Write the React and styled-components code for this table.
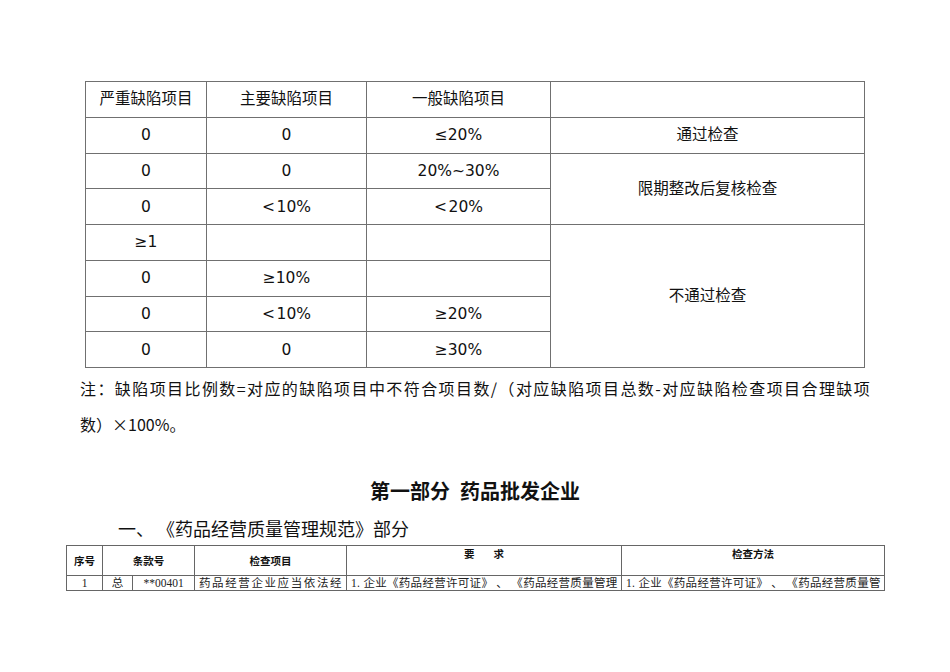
import React from "react";
import styled, { createGlobalStyle } from "styled-components";

const GlobalStyle = createGlobalStyle`
    html, body {
        margin: 0;
        padding: 0;
        background: #fff;
    }
    body {
        font-family: "DejaVu Sans", "Noto Sans CJK SC", sans-serif;
        color: #111;
    }
`;

const rows = [
    ["0", "0", "≤20%"],
    ["0", "0", "20%~30%"],
    ["0", "<\u200a10%", "<\u200a20%"],
    ["≥1", "", ""],
    ["0", "≥10%", ""],
    ["0", "<\u200a10%", "≥20%"],
    ["0", "0", "≥30%"],
];

const results = {
    0: { text: "通过检查", span: 1 },
    1: { text: "限期整改后复核检查", span: 2 },
    3: { text: "不通过检查", span: 4 },
};

const App = () => {
    return (
        <Page>
            <GlobalStyle />
            <GradeTable>
                <colgroup>
                    <col style={{ width: 121 }} />
                    <col style={{ width: 160 }} />
                    <col style={{ width: 184 }} />
                    <col style={{ width: 314 }} />
                </colgroup>
                <tbody>
                    <GradeRow>
                        <GradeCell>严重缺陷项目</GradeCell>
                        <GradeCell>主要缺陷项目</GradeCell>
                        <GradeCell>一般缺陷项目</GradeCell>
                        <GradeCell />
                    </GradeRow>
                    {rows.map((r, i) => (
                        <GradeRow key={i}>
                            {r.map((c, j) => (
                                <GradeCell key={j}>{c}</GradeCell>
                            ))}
                            {results[i] && (
                                <GradeCell rowSpan={results[i].span}>
                                    {results[i].text}
                                </GradeCell>
                            )}
                        </GradeRow>
                    ))}
                </tbody>
            </GradeTable>

            <Note>
                <NoteLine>
                    注：缺陷项目比例数=对应的缺陷项目中不符合项目数/（对应缺陷项目总数-对应缺陷检查项目合理缺项
                </NoteLine>
                <div>数）×100%。</div>
            </Note>

            <PartTitle>第一部分&nbsp;&nbsp;药品批发企业</PartTitle>
            <SectionTitle>一、{"\u2006"}《药品经营质量管理规范》部分</SectionTitle>

            <CheckTable>
                <colgroup>
                    <col style={{ width: 36 }} />
                    <col style={{ width: 30 }} />
                    <col style={{ width: 62 }} />
                    <col style={{ width: 152 }} />
                    <col style={{ width: 275 }} />
                    <col style={{ width: 263 }} />
                </colgroup>
                <tbody>
                    <HeadRow>
                        <HeadCell>序号</HeadCell>
                        <HeadCell colSpan={2}>条款号</HeadCell>
                        <HeadCell>检查项目</HeadCell>
                        <HeadCell $top>要&nbsp;&nbsp;&nbsp;&nbsp;&nbsp;&nbsp;&nbsp;&nbsp;求</HeadCell>
                        <HeadCell $top>检查方法</HeadCell>
                    </HeadRow>
                    <DataRow>
                        <DataCell $center>1</DataCell>
                        <DataCell $center>总</DataCell>
                        <DataCell $center>**00401</DataCell>
                        <DataCell $spacing={1.6}>药品经营企业应当依法经</DataCell>
                        <DataCell $spacing={0.3}>1. 企业《药品经营许可证》&nbsp;、&nbsp;《药品经营质量管理</DataCell>
                        <DataCell $spacing={0.3}>1. 企业《药品经营许可证》&nbsp;、&nbsp;《药品经营质量管</DataCell>
                    </DataRow>
                </tbody>
            </CheckTable>
        </Page>
    );
};

export default App;

const Page = styled.div`
    width: 950px;
    height: 672px;
    overflow: hidden;
    box-sizing: border-box;
    padding-top: 81px;
`;

const GradeTable = styled.table`
    margin-left: 85px;
    width: 779px;
    border-collapse: collapse;
    table-layout: fixed;
`;

const GradeRow = styled.tr`
    height: 35.75px;
`;

const GradeCell = styled.td`
    border: 1px solid #707070;
    padding: 0;
    text-align: center;
    vertical-align: middle;
    font-size: 15.5px;
    line-height: 20px;
`;

const Note = styled.div`
    margin: 2px 80px 0 80px;
    font-size: 16px;
    line-height: 36px;
    font-family: "Noto Sans CJK SC", "DejaVu Sans", sans-serif;
`;

const NoteLine = styled.div`
    text-align: justify;
    text-align-last: justify;
    white-space: nowrap;
    letter-spacing: 0.25px;
`;

const PartTitle = styled.div`
    margin-top: 35px;
    height: 30px;
    line-height: 30px;
    text-align: center;
    font-family: "Liberation Serif", "Noto Sans CJK SC", serif;
    font-weight: bold;
    font-size: 20px;
`;

const SectionTitle = styled.div`
    margin-top: 9px;
    padding-left: 118px;
    height: 24px;
    line-height: 24px;
    font-family: "Noto Sans CJK SC", sans-serif;
    font-size: 18px;
`;

const CheckTable = styled.table`
    margin-top: 5px;
    margin-left: 66px;
    width: 818px;
    border-collapse: collapse;
    table-layout: fixed;
`;

const HeadRow = styled.tr`
    height: 30px;
`;

const HeadCell = styled.td`
    border: 1px solid #666;
    padding: ${({ $top }) => ($top ? "1px 0 0" : "0")};
    text-align: center;
    vertical-align: ${({ $top }) => ($top ? "top" : "middle")};
    font-family: "Noto Sans CJK SC", sans-serif;
    font-weight: bold;
    font-size: 10.5px;
    line-height: 14px;
`;

const DataRow = styled.tr`
    height: 15px;
`;

const DataCell = styled.td`
    border: 1px solid #666;
    padding: 0 0 0 4px;
    text-align: ${({ $center }) => ($center ? "center" : "left")};
    ${({ $center }) => ($center ? "padding: 0;" : "")}
    white-space: nowrap;
    overflow: hidden;
    font-family: "Liberation Serif", "Noto Sans CJK SC", serif;
    font-size: 11.5px;
    line-height: 14px;
    letter-spacing: ${({ $spacing }) => ($spacing ? `${$spacing}px` : "0")};
    color: #222;
`;
